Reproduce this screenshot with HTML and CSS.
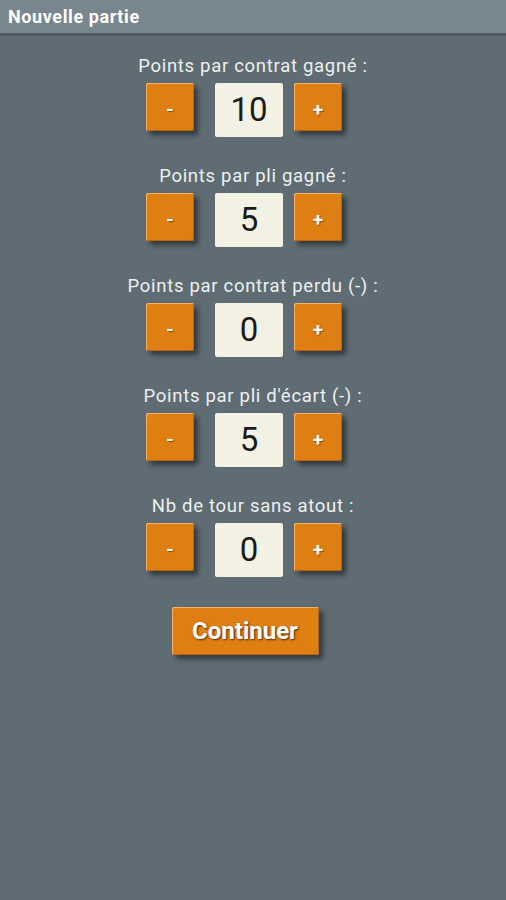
FILE: index.html
```html
<!DOCTYPE html>
<html lang="fr">
<head>
  <meta charset="UTF-8" />
  <meta name="viewport" content="width=device-width, initial-scale=1.0" />
  <title>Nouvelle partie</title>
  <link rel="stylesheet" href="styles.css">
</head>
<body>
  <div class="title-bar">Nouvelle partie</div>

  <div class="settings">
    <div class="setting">
      <div class="setting-label">Points par contrat gagné :</div>
      <div class="stepper">
        <button class="step-btn minus">-</button>
        <div class="step-value">10</div>
        <button class="step-btn plus">+</button>
      </div>
    </div>

    <div class="setting">
      <div class="setting-label">Points par pli gagné :</div>
      <div class="stepper">
        <button class="step-btn minus">-</button>
        <div class="step-value">5</div>
        <button class="step-btn plus">+</button>
      </div>
    </div>

    <div class="setting">
      <div class="setting-label">Points par contrat perdu (-) :</div>
      <div class="stepper">
        <button class="step-btn minus">-</button>
        <div class="step-value">0</div>
        <button class="step-btn plus">+</button>
      </div>
    </div>

    <div class="setting">
      <div class="setting-label">Points par pli d'écart (-) :</div>
      <div class="stepper">
        <button class="step-btn minus">-</button>
        <div class="step-value">5</div>
        <button class="step-btn plus">+</button>
      </div>
    </div>

    <div class="setting">
      <div class="setting-label">Nb de tour sans atout :</div>
      <div class="stepper">
        <button class="step-btn minus">-</button>
        <div class="step-value">0</div>
        <button class="step-btn plus">+</button>
      </div>
    </div>

    <button class="continue-btn">Continuer</button>
  </div>
</body>
</html>
```

FILE: styles.css
```css
body {
  margin: 0;
  background: #5f6c73;
  font-family: Roboto, "Liberation Sans", sans-serif;
  min-height: 900px;
}
.title-bar {
  height: 33px;
  line-height: 34px;
  padding-left: 8px;
  background: #78878e;
  border-bottom: 3px solid #525e64;
  color: #fff;
  font-weight: bold;
  font-size: 18px;
  letter-spacing: 0.6px;
}
.settings {
  display: flex;
  flex-direction: column;
  align-items: center;
  padding-top: 19px;
}
.setting {
  display: flex;
  flex-direction: column;
  align-items: center;
  height: 110px;
}
.setting-label {
  color: #eef0f0;
  font-size: 18.5px;
  letter-spacing: 0.7px;
  line-height: 22px;
  margin-bottom: 6px;
}
.stepper {
  display: flex;
  align-items: flex-start;
  margin-right: 18px;
}
.step-btn {
  width: 48px;
  height: 48px;
  padding: 5px 0 0;
  border: none;
  border-radius: 2px;
  background: #df7f12;
  box-shadow: inset 1px 1px 0 #f5b36a, inset -1px -1px 0 #b9650b, 4px 4px 5px rgba(20, 24, 26, 0.6);
  color: #fff;
  font-family: Roboto, "Liberation Sans", sans-serif;
  font-weight: bold;
  font-size: 19px;
  text-shadow: 1px 1px 1px rgba(90, 40, 0, 0.6);
}
.step-btn.minus {
  margin-right: 21px;
}
.step-btn.plus {
  margin-left: 11px;
}
.step-value {
  width: 68px;
  height: 54px;
  line-height: 54px;
  text-align: center;
  background: #f3f1e3;
  border-radius: 2px;
  color: #1b1b1b;
  font-size: 33px;
}
.continue-btn {
  margin-top: 2px;
  margin-right: 16px;
  width: 147px;
  height: 48px;
  padding: 0;
  border: none;
  border-radius: 2px;
  background: #df7f12;
  box-shadow: inset 1px 1px 0 #f5b36a, inset -1px -1px 0 #b9650b, 4px 4px 5px rgba(20, 24, 26, 0.6);
  color: #fff;
  font-family: Roboto, "Liberation Sans", sans-serif;
  font-weight: bold;
  font-size: 24px;
  text-shadow: 1px 1px 2px rgba(70, 30, 0, 0.9);
}
```
